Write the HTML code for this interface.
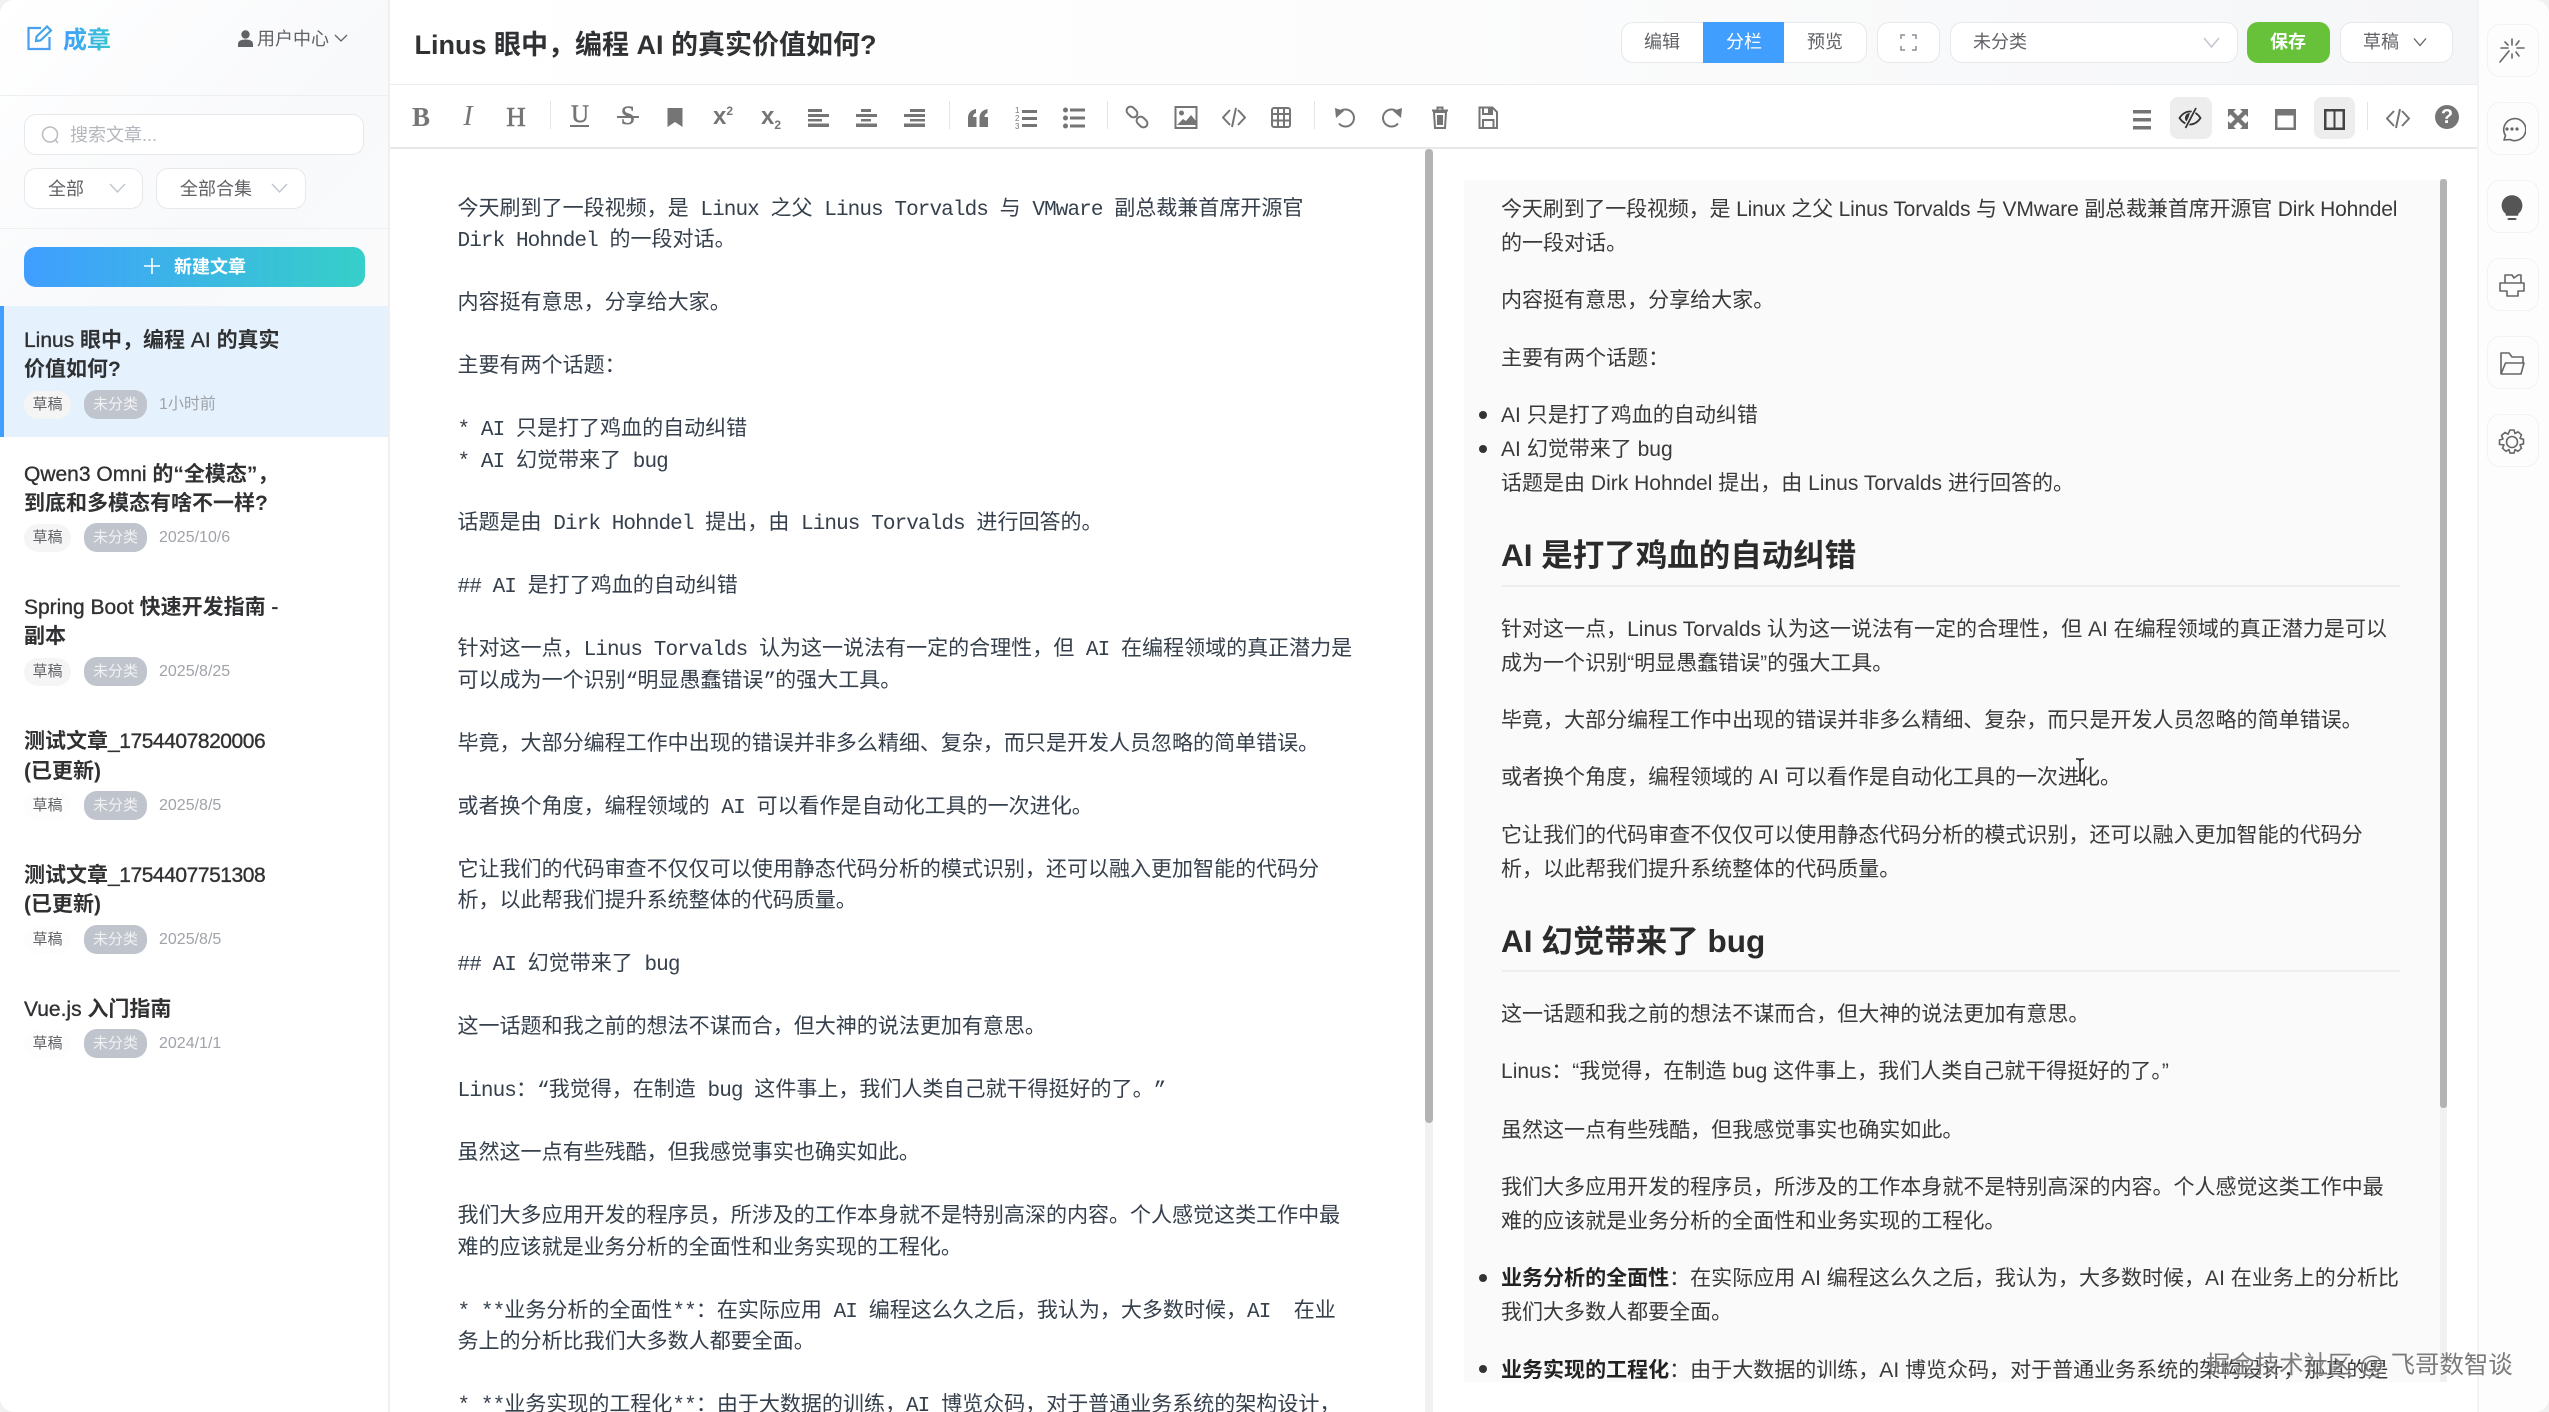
<!DOCTYPE html>
<html lang="zh"><head><meta charset="utf-8"><title>成章</title>
<style>
*{box-sizing:border-box}
html,body{margin:0;padding:0;width:2549px;height:1412px;overflow:hidden;background:#f1f1f1}
body{font-family:"Liberation Sans","Noto Sans CJK SC",sans-serif;color:#333}
#root{position:absolute;left:0;top:0;width:2549px;height:1412px;overflow:hidden;background:#fff;border-radius:14px}
.a{position:absolute}
#side{left:0;top:0;width:390px;height:1412px;background:#fff;border-right:2px solid #f0f0f1}
#sidetop{left:0;top:0;width:388px;height:306px;background:linear-gradient(135deg,#fff 0%,#f8f9fb 60%,#fafafb 100%)}
.hr{position:absolute;height:1px;background:#eeeff1}
.box{position:absolute;background:#fff;border:1.5px solid #e6e8ec;border-radius:12px}
.lb{position:absolute;white-space:nowrap;font-size:18px;color:#606266;line-height:26px}
.title{position:absolute;left:24px;font-size:21px;line-height:29px;font-weight:700;color:#303133;white-space:pre}
.title i{font-style:normal;font-weight:400;-webkit-text-stroke:.35px #303133}
.title i.n{letter-spacing:-.45px}
.tag{position:absolute;left:24px;width:47px;height:28px;border-radius:14px;background:#f5f5f6;color:#606266;font-size:15px;line-height:28px;text-align:center}
.cat{position:absolute;left:84px;width:63px;height:29px;border-radius:13px;background:#c0c4cc;color:#f1f2f4;font-size:15px;line-height:29px;text-align:center}
.dt{position:absolute;left:159px;font-size:16px;line-height:28px;color:#a0a3a8;white-space:nowrap}
#head{left:390px;top:0;width:2087px;height:85px;background:linear-gradient(90deg,#fff 0%,#fdfdfd 40%,#f5f6f8 100%);border-bottom:1.5px solid #ececee}
#tb{left:390px;top:85px;width:2087px;height:64px;background:#fff;border-bottom:2px solid #e8e8e8}
.ic{position:absolute;top:104.5px;width:24px;height:24px;fill:#757575}
.st{fill:none;stroke:#757575;stroke-width:2}
.t{position:absolute;top:103px;width:40px;text-align:center;line-height:28px;color:#757575;font-family:"Liberation Serif",serif;white-space:nowrap}
.sep{position:absolute;top:101px;width:1px;height:28px;background:#e4e4e4}
.e{position:absolute;left:457.5px;font-size:21.03px;line-height:32px;color:#36404c;white-space:pre;font-family:"Noto Sans CJK SC","Liberation Mono",monospace;text-spacing-trim:space-all}
.e i{font-style:normal;font-family:"Liberation Mono",monospace;letter-spacing:-.92px}
#pv{left:1464px;top:180px;width:976px;height:1202px;background:#fafafa}
.p{position:absolute;left:1501px;font-size:21.03px;line-height:34px;color:#3a3a3a;white-space:pre}
.p b{font-weight:700;color:#222}
.h{position:absolute;left:1501px;font-size:31.5px;line-height:44px;font-weight:700;color:#2b2b2b;white-space:pre}
.dot{position:absolute;left:1479px;width:8px;height:8px;border-radius:50%;background:#333}
#rp{left:2477px;top:0;width:72px;height:1412px;background:#fdfdfd;border-left:2px solid #f3f3f4}
.rb{position:absolute;left:2487px;width:52px;height:53px;border:1.5px solid #f3f3f4;border-radius:13px;background:#fdfdfd}
.ri{position:absolute;left:2498px;width:28px;height:28px;fill:none;stroke:#666;stroke-width:1.6;stroke-linecap:round;stroke-linejoin:round}
</style></head><body><div id="root">

<div class="a" id="side"></div>
<div class="a" id="sidetop"></div>
<div class="hr" style="left:0;top:95px;width:388px"></div>
<div class="hr" style="left:0;top:228px;width:388px"></div>

<svg class="a" style="left:26px;top:25px;width:27px;height:26px" viewBox="0 0 27 26" fill="none" stroke="#4a9ff0" stroke-width="2.2"><path d="M15 3H2.5v21h21V12"/><path d="M10 16l.6-4.5L21 1.5l4 4L14.5 15.500z" stroke="#45a5ea"/></svg>
<div class="a" style="left:63px;top:22.5px;font-size:24px;line-height:36px;font-weight:700;white-space:nowrap;color:#3aa8dd;background:linear-gradient(90deg,#409eff,#36c5cf);-webkit-background-clip:text;background-clip:text;-webkit-text-fill-color:transparent">成章</div>
<svg class="a" style="left:238px;top:30px;width:15px;height:17px" viewBox="0 0 15 17" fill="#606266"><circle cx="7.500" cy="4.500" r="4.200"/><path d="M0 17v-3c0-3 3-4.500 7.500-4.500S15 11 15 14v3z"/></svg>
<div class="lb" style="left:257px;top:26px">用户中心</div>
<svg class="a" style="left:334px;top:33px;width:14px;height:10px" viewBox="0 0 14 10" fill="none" stroke="#606266" stroke-width="1.300"><path d="M1 2l6 6 6-6"/></svg>

<div class="box" style="left:24px;top:114px;width:340px;height:41px"></div>
<svg class="a" style="left:41px;top:125px;width:19px;height:20px" viewBox="0 0 19 20" fill="none" stroke="#b8bbc2" stroke-width="1.500"><circle cx="9" cy="9.500" r="7.500"/><path d="M14.500 15l2.500 3"/></svg>
<div class="lb" style="left:70px;top:122px;color:#b4b7bd">搜索文章...</div>

<div class="box" style="left:24px;top:168px;width:119px;height:41px"></div>
<div class="lb" style="left:48px;top:176px">全部</div>
<svg class="a" style="left:109px;top:182px;width:17px;height:12px" viewBox="0 0 17 12" fill="none" stroke="#c0c4cc" stroke-width="1.400"><path d="M1 2l7.500 8L16 2"/></svg>
<div class="box" style="left:156px;top:168px;width:150px;height:41px"></div>
<div class="lb" style="left:180px;top:176px">全部合集</div>
<svg class="a" style="left:271px;top:182px;width:17px;height:12px" viewBox="0 0 17 12" fill="none" stroke="#c0c4cc" stroke-width="1.400"><path d="M1 2l7.500 8L16 2"/></svg>

<div class="a" style="left:24px;top:247px;width:341px;height:40px;border-radius:12px;background:linear-gradient(90deg,#409eff,#36cfc9)"></div>
<svg class="a" style="left:144px;top:258px;width:16px;height:16px" viewBox="0 0 16 16" stroke="#fff" stroke-width="1.600"><path d="M8 0v16M0 8h16"/></svg>
<div class="lb" style="left:174px;top:254px;color:#fff;font-weight:700">新建文章</div>

<div class="a" style="left:0;top:306px;width:388px;height:131px;background:#e5f2fe"></div>
<div class="a" style="left:0;top:306px;width:4px;height:131px;background:#409eff"></div>
<div class="title" style="top:326px"><i>Linus </i>眼中，编程<i> AI </i>的真实</div>
<div class="title" style="top:355px">价值如何?</div>
<div class="tag" style="top:391px">草稿</div><div class="cat" style="top:390px">未分类</div><div class="dt" style="top:391px">1小时前</div>

<div class="title" style="top:459.5px"><i>Qwen3 Omni </i>的“全模态”，</div>
<div class="title" style="top:489px">到底和多模态有啥不一样?</div>
<div class="tag" style="top:524px">草稿</div><div class="cat" style="top:523px">未分类</div><div class="dt" style="top:524px">2025/10/6</div>

<div class="title" style="top:593px"><i>Spring Boot </i>快速开发指南<i> -</i></div>
<div class="title" style="top:622px">副本</div>
<div class="tag" style="top:658px">草稿</div><div class="cat" style="top:657px">未分类</div><div class="dt" style="top:658px">2025/8/25</div>

<div class="title" style="top:726.5px">测试文章<i class="n">_1754407820006</i></div>
<div class="title" style="top:757px">(已更新)</div>
<div class="tag" style="top:792px;background:#fdfdfd">草稿</div><div class="cat" style="top:791px">未分类</div><div class="dt" style="top:792px">2025/8/5</div>

<div class="title" style="top:861px">测试文章<i class="n">_1754407751308</i></div>
<div class="title" style="top:890px">(已更新)</div>
<div class="tag" style="top:926px;background:#fdfdfd">草稿</div><div class="cat" style="top:925px">未分类</div><div class="dt" style="top:926px">2025/8/5</div>

<div class="title" style="top:994.5px"><i>Vue.js </i>入门指南</div>
<div class="tag" style="top:1030px;background:#fdfdfd">草稿</div><div class="cat" style="top:1029px">未分类</div><div class="dt" style="top:1030px">2024/1/1</div>

<div class="a" id="head"></div>
<div class="a" style="left:414.5px;top:25px;font-size:27px;line-height:40px;font-weight:700;color:#303133;white-space:nowrap">Linus 眼中，编程 AI 的真实价值如何?</div>

<div class="box" style="left:1621px;top:22px;width:246px;height:41px"></div>
<div class="a" style="left:1703px;top:22px;width:81px;height:41px;background:#409eff"></div>
<div class="lb" style="left:1644px;top:29px">编辑</div>
<div class="lb" style="left:1726px;top:29px;color:#fff">分栏</div>
<div class="lb" style="left:1807px;top:29px">预览</div>
<div class="box" style="left:1877px;top:22px;width:63px;height:41px"></div>
<svg class="a" style="left:1900px;top:34px;width:17px;height:17px" viewBox="0 0 17 17" fill="none" stroke="#8a8d93" stroke-width="1.500"><path d="M1 5V1h4M12 1h4v4M1 12v4h4M16 12v4h-4"/></svg>
<div class="box" style="left:1950px;top:22px;width:288px;height:41px"></div>
<div class="lb" style="left:1973px;top:29px">未分类</div>
<svg class="a" style="left:2203px;top:36px;width:17px;height:13px" viewBox="0 0 17 13" fill="none" stroke="#c0c4cc" stroke-width="1.400"><path d="M1 2l7.500 9L16 2"/></svg>
<div class="a" style="left:2247px;top:22px;width:83px;height:41px;background:#67c23a;border-radius:11px"></div>
<div class="lb" style="left:2270px;top:29px;color:#fff;font-weight:700">保存</div>
<div class="box" style="left:2340px;top:22px;width:113px;height:41px"></div>
<div class="lb" style="left:2363px;top:29px">草稿</div>
<svg class="a" style="left:2413px;top:37px;width:14px;height:10px" viewBox="0 0 14 10" fill="none" stroke="#606266" stroke-width="1.300"><path d="M1 1.500l6 7 6-7"/></svg>

<div class="a" id="tb"></div>
<div class="t" style="left:401px;font-size:27px;font-weight:700">B</div>
<div class="t" style="left:448px;font-size:28px;font-style:italic">I</div>
<div class="t" style="left:496px;font-size:27px;-webkit-text-stroke:.6px #757575">H</div>
<div class="sep" style="left:550px"></div>
<div class="t" style="left:560px;font-size:25px;top:101px;-webkit-text-stroke:.5px #757575">U</div>
<div class="a" style="left:570px;top:125px;width:19px;height:2px;background:#757575"></div>
<div class="t" style="left:608px;font-size:26px;top:102px;-webkit-text-stroke:.5px #757575">S</div>
<div class="a" style="left:617px;top:116px;width:22px;height:2px;background:#757575"></div>
<svg class="ic" style="left:663px" viewBox="0 0 24 24"><path d="M4.500 3h15v19l-7.500-5-7.500 5z"/></svg>
<div class="t" style="left:703px;font:700 24px/28px 'Liberation Sans',sans-serif">x<sup style="font-size:12px;line-height:0;vertical-align:9px">2</sup></div>
<div class="t" style="left:751px;font:700 24px/28px 'Liberation Sans',sans-serif">x<sub style="font-size:12px;line-height:0;vertical-align:-5px">2</sub></div>
<svg class="ic" style="left:806px" viewBox="0 0 24 24"><path d="M2 4h14v3H2zM2 9h21v3H2zM2 14h14v2.500H2zM2 18.500h21V22H2z"/></svg>
<svg class="ic" style="left:854px" viewBox="0 0 24 24"><path d="M7 4h10v3H7zM2 9h21v3H2zM7 14h10v2.500H7zM2 18.500h21V22H2z"/></svg>
<svg class="ic" style="left:902px" viewBox="0 0 24 24"><path d="M8 4h15v3H8zM2 9h21v3H2zM8 14h15v2.500H8zM2 18.500h21V22H2z"/></svg>
<div class="sep" style="left:949px"></div>
<svg class="ic" style="left:966px" viewBox="0 0 24 24"><path d="M2 22v-9c0-5 3-8 8-9v4c-2 .6-3 2-3 4h3.500v10zM13.500 22v-9c0-5 3-8 8-9v4c-2 .6-3 2-3 4H22v10z"/></svg>
<svg class="ic" style="left:1014px" viewBox="0 0 24 24"><path d="M8 5h15v3H8zM8 12h15v3H8zM8 19h15v3H8z"/><text x="1" y="8" font-size="8" font-family="Liberation Sans" fill="#757575">1</text><text x="1" y="16" font-size="8" font-family="Liberation Sans" fill="#757575">2</text><text x="1" y="24" font-size="8" font-family="Liberation Sans" fill="#757575">3</text></svg>
<svg class="ic" style="left:1062px" viewBox="0 0 24 24"><circle cx="3.500" cy="5" r="2.500"/><circle cx="3.500" cy="13" r="2.500"/><circle cx="3.500" cy="21" r="2.500"/><path d="M8 3.500h15v3H8zM8 11.500h15v3H8zM8 19.500h15v3H8z"/></svg>
<div class="sep" style="left:1107px"></div>
<svg class="ic" style="left:1125px" viewBox="0 0 24 24"><g class="st" stroke-width="2.400"><rect x="1" y="3" width="12" height="8" rx="4" transform="rotate(45 7 7)"/><rect x="11" y="13" width="12" height="8" rx="4" transform="rotate(45 17 17)"/></g></svg>
<svg class="ic" style="left:1174px" viewBox="0 0 24 24"><rect x="1.500" y="2" width="21" height="21" class="st" stroke-width="1.500"/><circle cx="7.500" cy="8" r="2.500"/><path d="M3 20l6-6 3 2 5-6 5 6v4z"/></svg>
<svg class="ic" style="left:1222px" viewBox="0 0 24 24"><path class="st" stroke-width="1" d="M8 5l-7 7.500L8 20M16 5l7 7.500-7 7.500M14 3l-4 19"/></svg>
<svg class="ic" style="left:1269px" viewBox="0 0 24 24"><rect x="3" y="3" width="18" height="19" rx="2" class="st" stroke-width="1.600"/><path class="st" stroke-width="1.100" d="M3 9h18M3 15.500h18M9 3v19M15 3v19"/></svg>
<div class="sep" style="left:1314px"></div>
<svg class="ic" style="left:1333px" viewBox="0 0 24 24"><path class="st" stroke-width="3" d="M7 6.500a8.500 8.500 0 1 1-1 12"/><path d="M2 3l1 10 8-7z"/></svg>
<svg class="ic" style="left:1380px" viewBox="0 0 24 24"><path class="st" stroke-width="3" d="M17 6.500a8.500 8.500 0 1 0 1 12"/><path d="M22 3l-1 10-8-7z"/></svg>
<svg class="ic" style="left:1428px" viewBox="0 0 24 24"><path class="st" stroke-width="1.600" d="M6 7h12l-1 16H7zM4 5.500h16M9.500 5V2.500h5V5"/><path class="st" stroke-width="1.100" d="M10 10v10M12 10v10M14 10v10"/></svg>
<svg class="ic" style="left:1476px" viewBox="0 0 24 24"><path class="st" stroke-width="1.400" d="M3.500 2.500h13l4.500 4.500v16H3.500zM7 2.500v6.500h9V2.500M7 23v-8h10.500v8"/><path d="M12 3h3v5h-3z"/></svg>

<svg class="ic" style="left:2130px;top:108px" viewBox="0 0 24 24"><path d="M3 2h18v3.500H3zM3 10h18v3.500H3zM3 18h18v3.500H3z"/></svg>
<div class="a" style="left:2170px;top:97px;width:42px;height:42px;background:#ededed;border-radius:8px"></div>
<svg class="ic" style="left:2178px;top:106px;fill:#333" viewBox="0 0 24 24"><path d="M1.500 12C4.500 7.500 8 5.500 12 5.500s7.500 2 10.500 6.500c-3 4.500-6.500 6.500-10.500 6.500S4.500 16.500 1.500 12z" fill="none" stroke="#333" stroke-width="1.800"/><path d="M12 7a5 5 0 0 0-3 9z"/><path d="M18 1.500L7 22.500" stroke="#ededed" stroke-width="4"/><path d="M18 2L7.500 22" stroke="#333" stroke-width="1.800"/></svg>
<svg class="ic" style="left:2226px;top:107px" viewBox="0 0 24 24"><path d="M2 2h8L7.500 4.500 12 9l4.500-4.500L14 2h8v8l-2.500-2.500L15 12l4.500 4.500L22 14v8h-8l2.500-2.500L12 15l-4.500 4.500L10 22H2v-8l2.500 2.500L9 12 4.500 7.500 2 10z"/></svg>
<svg class="ic" style="left:2273px;top:107px" viewBox="0 0 24 24"><path fill-rule="evenodd" d="M2 2h21v21H2zM4.500 8.500v12h16v-12z"/></svg>
<div class="a" style="left:2314px;top:97px;width:41px;height:42px;background:#ededed;border-radius:8px"></div>
<svg class="ic" style="left:2322px;top:107px;fill:#444" viewBox="0 0 24 24"><path fill-rule="evenodd" d="M2 2h21v21H2zM4.500 4.500v16h7v-16zM13.500 4.500v16h7v-16z"/></svg>
<div class="sep" style="left:2367px;top:102px"></div>
<svg class="ic" style="left:2385.500px;top:106px" viewBox="0 0 24 24"><path class="st" stroke-width="1" d="M8 5l-7 7.500L8 20M16 5l7 7.500-7 7.500M14 3l-4 19"/></svg>
<div class="a" style="left:2435px;top:105px;width:24px;height:24px;border-radius:50%;background:#757575;color:#fff;font:700 20px/24px 'Liberation Sans',sans-serif;text-align:center">?</div>

<div class="a" style="left:1425px;top:149px;width:8px;height:1263px;background:#f1f1f1"></div>
<div class="a" style="left:1425px;top:149px;width:8px;height:974px;background:#b3b3b3;border-radius:4px"></div>

<div class="e" style="top:190.500px">今天刷到了一段视频，是<i> Linux </i>之父<i> Linus Torvalds </i>与<i> VMware </i>副总裁兼首席开源官</div>
<div class="e" style="top:222px"><i>Dirk Hohndel </i>的一段对话。</div>
<div class="e" style="top:285px">内容挺有意思，分享给大家。</div>
<div class="e" style="top:348px">主要有两个话题：</div>
<div class="e" style="top:411px"><i>* AI </i>只是打了鸡血的自动纠错</div>
<div class="e" style="top:442.500px"><i>* AI </i>幻觉带来了<i> bug</i></div>
<div class="e" style="top:505px">话题是由<i> Dirk Hohndel </i>提出，由<i> Linus Torvalds </i>进行回答的。</div>
<div class="e" style="top:568px"><i>## AI </i>是打了鸡血的自动纠错</div>
<div class="e" style="top:631px">针对这一点，<i>Linus Torvalds </i>认为这一说法有一定的合理性，但<i> AI </i>在编程领域的真正潜力是</div>
<div class="e" style="top:662.500px">可以成为一个识别<i>“</i>明显愚蠢错误<i>”</i>的强大工具。</div>
<div class="e" style="top:726px">毕竟，大部分编程工作中出现的错误并非多么精细、复杂，而只是开发人员忽略的简单错误。</div>
<div class="e" style="top:789px">或者换个角度，编程领域的<i> AI </i>可以看作是自动化工具的一次进化。</div>
<div class="e" style="top:851.500px">它让我们的代码审查不仅仅可以使用静态代码分析的模式识别，还可以融入更加智能的代码分</div>
<div class="e" style="top:883px">析，以此帮我们提升系统整体的代码质量。</div>
<div class="e" style="top:946px"><i>## AI </i>幻觉带来了<i> bug</i></div>
<div class="e" style="top:1009px">这一话题和我之前的想法不谋而合，但大神的说法更加有意思。</div>
<div class="e" style="top:1072px"><i>Linus</i>：<i>“</i>我觉得，在制造<i> bug </i>这件事上，我们人类自己就干得挺好的了。<i>”</i></div>
<div class="e" style="top:1135px">虽然这一点有些残酷，但我感觉事实也确实如此。</div>
<div class="e" style="top:1198px">我们大多应用开发的程序员，所涉及的工作本身就不是特别高深的内容。个人感觉这类工作中最</div>
<div class="e" style="top:1229.500px">难的应该就是业务分析的全面性和业务实现的工程化。</div>
<div class="e" style="top:1292.500px"><i>* **</i>业务分析的全面性<i>**</i>：在实际应用<i> AI </i>编程这么久之后，我认为，大多数时候，<i>AI  </i>在业</div>
<div class="e" style="top:1324px">务上的分析比我们大多数人都要全面。</div>
<div class="e" style="top:1387px"><i>* **</i>业务实现的工程化<i>**</i>：由于大数据的训练，<i>AI </i>博览众码，对于普通业务系统的架构设计，</div>

<div class="a" id="pv"></div>
<div class="a" style="left:2440px;top:179px;width:7px;height:1203px;background:#f1f1f1"></div>
<div class="a" style="left:2440px;top:179px;width:7px;height:929px;background:#b3b3b3;border-radius:3px"></div>

<div class="p" style="top:192.500px;letter-spacing:-.16px">今天刷到了一段视频，是 Linux 之父 Linus Torvalds 与 VMware 副总裁兼首席开源官 Dirk Hohndel</div>
<div class="p" style="top:226.500px">的一段对话。</div>
<div class="p" style="top:283.500px">内容挺有意思，分享给大家。</div>
<div class="p" style="top:342px">主要有两个话题：</div>
<div class="dot" style="top:411px"></div>
<div class="p" style="top:398.500px">AI 只是打了鸡血的自动纠错</div>
<div class="dot" style="top:445px"></div>
<div class="p" style="top:432.500px">AI 幻觉带来了 bug</div>
<div class="p" style="top:466.500px">话题是由 Dirk Hohndel 提出，由 Linus Torvalds 进行回答的。</div>
<div class="h" style="top:533px">AI 是打了鸡血的自动纠错</div>
<div class="a" style="left:1502px;top:585px;width:898px;height:1.500px;background:#eeeeef"></div>
<div class="p" style="top:613px">针对这一点，Linus Torvalds 认为这一说法有一定的合理性，但 AI 在编程领域的真正潜力是可以</div>
<div class="p" style="top:646.500px">成为一个识别“明显愚蠢错误”的强大工具。</div>
<div class="p" style="top:703.500px">毕竟，大部分编程工作中出现的错误并非多么精细、复杂，而只是开发人员忽略的简单错误。</div>
<div class="p" style="top:760.500px">或者换个角度，编程领域的 AI 可以看作是自动化工具的一次进化。</div>
<div class="p" style="top:818.500px">它让我们的代码审查不仅仅可以使用静态代码分析的模式识别，还可以融入更加智能的代码分</div>
<div class="p" style="top:852.500px">析，以此帮我们提升系统整体的代码质量。</div>
<div class="h" style="top:919px">AI 幻觉带来了 bug</div>
<div class="a" style="left:1502px;top:970px;width:898px;height:1.500px;background:#eeeeef"></div>
<div class="p" style="top:997.500px">这一话题和我之前的想法不谋而合，但大神的说法更加有意思。</div>
<div class="p" style="top:1054.500px">Linus：“我觉得，在制造 bug 这件事上，我们人类自己就干得挺好的了。”</div>
<div class="p" style="top:1114px">虽然这一点有些残酷，但我感觉事实也确实如此。</div>
<div class="p" style="top:1170.500px">我们大多应用开发的程序员，所涉及的工作本身就不是特别高深的内容。个人感觉这类工作中最</div>
<div class="p" style="top:1205px">难的应该就是业务分析的全面性和业务实现的工程化。</div>
<div class="dot" style="top:1274px"></div>
<div class="p" style="top:1262px"><b>业务分析的全面性</b>：在实际应用 AI 编程这么久之后，我认为，大多数时候，AI 在业务上的分析比</div>
<div class="p" style="top:1296px">我们大多数人都要全面。</div>
<div class="dot" style="top:1365px"></div>
<div class="p" style="top:1353.500px"><b>业务实现的工程化</b>：由于大数据的训练，AI 博览众码，对于普通业务系统的架构设计，那真的是</div>

<svg class="a" style="left:2073px;top:758px;width:14px;height:24px" viewBox="0 0 14 24" fill="none" stroke="#222" stroke-width="1.500"><path d="M3 1h3l1 2 1-2h3M7 3v18M3 23h3l1-2 1 2h3"/></svg>

<div class="a" id="rp"></div>
<div class="rb" style="top:24px"></div>
<svg class="ri" style="top:37px" viewBox="0 0 28 28"><path d="M14 2v6M14 17v4M3 11h7M19 11h7M7 5l3 3M21 4l-3 4M18 15l3 4M11 14L2 25"/></svg>
<div class="rb" style="top:102px"></div>
<svg class="ri" style="top:115px" viewBox="0 0 28 28"><path d="M6 25l1.500-4.500A11 11 0 1 1 12 24.500z"/><circle cx="9" cy="14" r=".8"/><circle cx="14" cy="14" r=".8"/><circle cx="19" cy="14" r=".8"/></svg>
<div class="rb" style="top:180px"></div>
<svg class="ri" style="top:194px;fill:#555;stroke:#555" viewBox="0 0 28 28"><path d="M14 2a9.500 9.500 0 0 0-5.500 17.300V21h11v-1.700A9.500 9.500 0 0 0 14 2z"/><path d="M10.500 25h7" stroke-width="2"/></svg>
<div class="rb" style="top:258px"></div>
<svg class="ri" style="top:271px" viewBox="0 0 28 28"><path d="M7 12V4h7l2 3 4-3h3v8M2 12h24v8h-6v5H9v-5H2z"/></svg>
<div class="rb" style="top:336px"></div>
<svg class="ri" style="top:349px" viewBox="0 0 28 28"><path d="M3 25V4h8l3 4h11v6M3 25h20l3-11H7.500z"/></svg>
<div class="rb" style="top:414px"></div>
<svg class="ri" style="top:428px" viewBox="0 0 28 28"><circle cx="14" cy="14" r="5.500"/><path d="M12 2h4l1 3.500 3-1.700 3.500 3-1.500 3.500 3.500 1v4.500l-3.500 1 1.500 3.500-3.500 3-3-1.700-1 3.500h-4l-1-3.500-3 1.700-3.500-3 1.500-3.500L1.500 16.500V12l3.500-1L3.500 7.500 7 4.500l3 1.700z"/></svg>

<div class="a" style="left:2206px;top:1347.5px;font-size:24.4px;line-height:36px;white-space:pre;color:rgba(100,100,100,.85);text-shadow:1px 1px 1px rgba(255,255,255,.7)">掘金技术社区 @ 飞哥数智谈</div>

</div></body></html>
